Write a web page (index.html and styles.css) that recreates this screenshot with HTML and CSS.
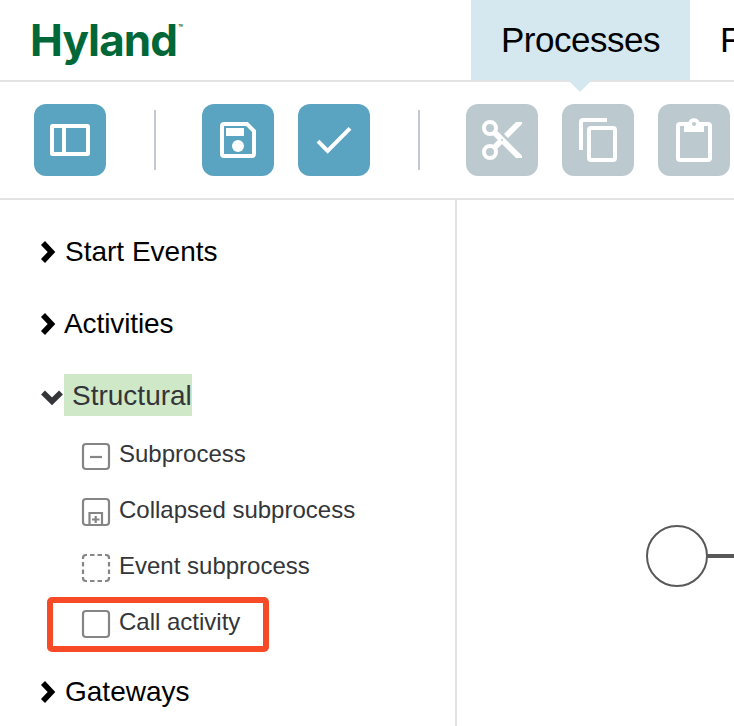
FILE: index.html
```
<!DOCTYPE html>
<html lang="en">
<head>
<meta charset="utf-8">
<title>Hyland Processes</title>
<link rel="stylesheet" href="styles.css">
</head>
<body>
<header class="header">
  <div class="logo">Hyland<span class="tm">™</span></div>
  <nav class="tabs">
    <a class="tab active">Processes</a>
    <a class="tab">F</a>
  </nav>
</header>
<div class="toolbar">
  <button class="tool"><svg viewBox="0 0 72 72"><rect class="line" x="18" y="22" width="36" height="28" rx=".5"/><path class="line" d="M30 22V50"/></svg></button>
  <span class="separator"></span>
  <button class="tool"><svg viewBox="0 0 72 72"><path class="line" d="M20 22Q20 20 22 20H45L52 27V50Q52 52 50 52H22Q20 52 20 50Z"/><path class="solid" d="M24 24H42V32H24Z"/><circle class="solid" cx="36" cy="42" r="6"/></svg></button>
  <button class="tool"><svg viewBox="0 0 72 72"><path class="line" d="M20 37.2L29.6 46.8L52 24.4"/></svg></button>
  <span class="separator"></span>
  <button class="tool disabled"><svg viewBox="0 0 72 72"><circle class="line" cx="24" cy="24" r="6"/><circle class="line" cx="24" cy="48" r="6"/><path class="solid" d="M27 31.3L31.3 27L56 51.8V54H50L36 40L31.3 44.8L27.2 40.7L31.9 36Z"/><path class="solid" d="M38 30L50 18H56V20L42 34Z"/><circle class="hole" cx="36" cy="36" r="1"/></svg></button>
  <button class="tool disabled"><svg viewBox="0 0 72 72"><path class="line" d="M45 16H21Q19 16 19 18V46"/><rect class="line" x="27" y="24" width="26" height="32" rx="2"/></svg></button>
  <button class="tool disabled"><svg viewBox="0 0 72 72"><rect class="line" x="20" y="20" width="32" height="36" rx="2"/><path class="solid" d="M26 18H30.4A6 6 0 0 1 41.6 18H46V28H26Z"/><circle class="hole" cx="36" cy="20" r="2"/></svg></button>
</div>
<main class="workspace">
  <aside class="palette">
    <div class="group"><svg class="chevron" viewBox="0 0 24 24"><path d="M3 3L11.5 12L3 21"/></svg><span>Start Events</span></div>
    <div class="group"><svg class="chevron" viewBox="0 0 24 24"><path d="M3 3L11.5 12L3 21"/></svg><span class="activities">Activities</span></div>
    <div class="group open"><svg class="chevron" viewBox="0 0 24 24"><path d="M3 9.5L12 18.3L21 9.5"/></svg><span class="mark">Structural</span></div>
    <ul class="items">
      <li><svg class="shape" viewBox="0 0 30 30"><rect x="2" y="3" width="26" height="25" rx="3"/><path d="M9 16H21"/></svg><span>Subprocess</span></li>
      <li><svg class="shape" viewBox="0 0 30 30"><rect x="2" y="2" width="26" height="26" rx="3"/><path d="M8.5 28V16H21V28M14.7 19V26M11 22.5H18.5"/></svg><span>Collapsed subprocess</span></li>
      <li><svg class="shape" viewBox="0 0 30 30"><path d="M2 6V5Q2 2 5 2H6M24 2H25Q28 2 28 5V6M28 24V25Q28 28 25 28H24M6 28H5Q2 28 2 25V24M9 2H13.5M16.5 2H21M9 28H13.5M16.5 28H21M2 9V13.5M2 16.5V21M28 9V13.5M28 16.5V21"/></svg><span>Event subprocess</span></li>
      <li class="highlighted"><svg class="shape" viewBox="0 0 30 30"><rect x="2" y="2" width="26" height="26" rx="3"/></svg><span>Call activity</span></li>
    </ul>
    <div class="group"><svg class="chevron" viewBox="0 0 24 24"><path d="M3 3L11.5 12L3 21"/></svg><span>Gateways</span></div>
  </aside>
  <section class="canvas">
    <svg class="start-event" viewBox="0 0 88 62"><circle cx="31" cy="31" r="30"/><path d="M61 31H88"/></svg>
  </section>
</main>
</body>
</html>
```

FILE: styles.css
```
*, *::before, *::after { box-sizing: border-box; }
body {
  margin: 0;
  height: 726px;
  overflow: hidden;
  display: flex;
  flex-direction: column;
  background: #fff;
  color: #000;
  font-family: "Liberation Sans", Arial, sans-serif;
}
.header {
  height: 82px;
  flex: none;
  display: flex;
  border-bottom: 2px solid #e3e3e3;
}
.logo {
  width: 471px;
  flex: none;
  padding: 13px 0 0 29px;
  color: #006838;
  font: 700 44px/54px Inter, sans-serif;
  letter-spacing: -0.9px;
  white-space: nowrap;
  text-indent: 1px;
}
.tm {
  font-size: 7px;
  line-height: 1;
  letter-spacing: 0;
  vertical-align: 26px;
  margin-left: 1px;
}
.tabs { display: flex; flex: 1; min-width: 0; }
.tab {
  height: 80px;
  padding-left: 30px;
  font-size: 35px;
  line-height: 80px;
  letter-spacing: -0.5px;
}
.tab.active {
  position: relative;
  width: 219px;
  flex: none;
  background: #d5e8ef;
}
.tab.active::after {
  content: "";
  position: absolute;
  top: 80px;
  left: 97px;
  border: solid transparent;
  border-width: 12px 12px 0;
  border-top-color: #d5e8ef;
}
.toolbar {
  height: 118px;
  flex: none;
  display: flex;
  align-items: center;
  gap: 24px;
  padding-left: 34px;
  border-bottom: 2px solid #e3e3e3;
}
.tool {
  width: 72px;
  height: 72px;
  flex: none;
  padding: 0;
  border: 0;
  border-radius: 12px;
  background: #5ba4c1;
}
.tool svg { display: block; width: 72px; height: 72px; }
.tool.disabled { background: #bcc9cf; }
.line { fill: none; stroke: #fff; stroke-width: 4; }
.solid { fill: #fff; }
.hole { fill: #bcc9cf; }
.separator {
  width: 2px;
  height: 60px;
  flex: none;
  margin: 0 22px 0 24px;
  background: #c3c9d4;
}
.workspace { display: flex; flex: 1; min-height: 0; }
.palette {
  width: 457px;
  flex: none;
  padding-top: 15px;
  border-right: 2px solid #e3e3e3;
}
.group {
  height: 72px;
  display: flex;
  align-items: center;
  padding: 1px 0 0 40px;
  font-size: 28px;
  line-height: 42px;
}
.group > span { margin-left: 1px; }
.group > .activities { margin-left: 0; letter-spacing: -0.1px; }
.group.open { height: 67px; align-items: flex-start; padding-top: 15px; color: #333539; }
.group.open .chevron { margin-top: 9px; }
.chevron {
  width: 24px;
  height: 24px;
  flex: none;
  fill: none;
  stroke: currentColor;
  stroke-width: 5.5;
}
.group > .mark {
  width: 128px;
  height: 42px;
  margin-left: 0;
  padding-left: 8px;
  line-height: 44px;
  background: #cfe9c8;
}
.items {
  margin: 0 0 5px;
  padding: 0;
  list-style: none;
  color: #333539;
  font-size: 24px;
}
.items li {
  height: 56px;
  display: flex;
  align-items: center;
  gap: 8px;
  padding-left: 81px;
  position: relative;
}
.shape {
  width: 30px;
  height: 30px;
  margin-top: 4px;
  fill: none;
  stroke: #858585;
  stroke-width: 2.2;
}
.highlighted::before {
  content: "";
  position: absolute;
  left: 47px;
  top: 3px;
  width: 222px;
  height: 55px;
  border: 6px solid #f74a27;
  border-radius: 5px;
}
.canvas { flex: 1; min-width: 0; overflow: hidden; position: relative; }
.start-event {
  position: absolute;
  left: 189px;
  top: 325px;
  width: 88px;
  height: 62px;
  fill: none;
  stroke: #585858;
}
.start-event circle { stroke-width: 2; }
.start-event path { stroke-width: 4; }
```
